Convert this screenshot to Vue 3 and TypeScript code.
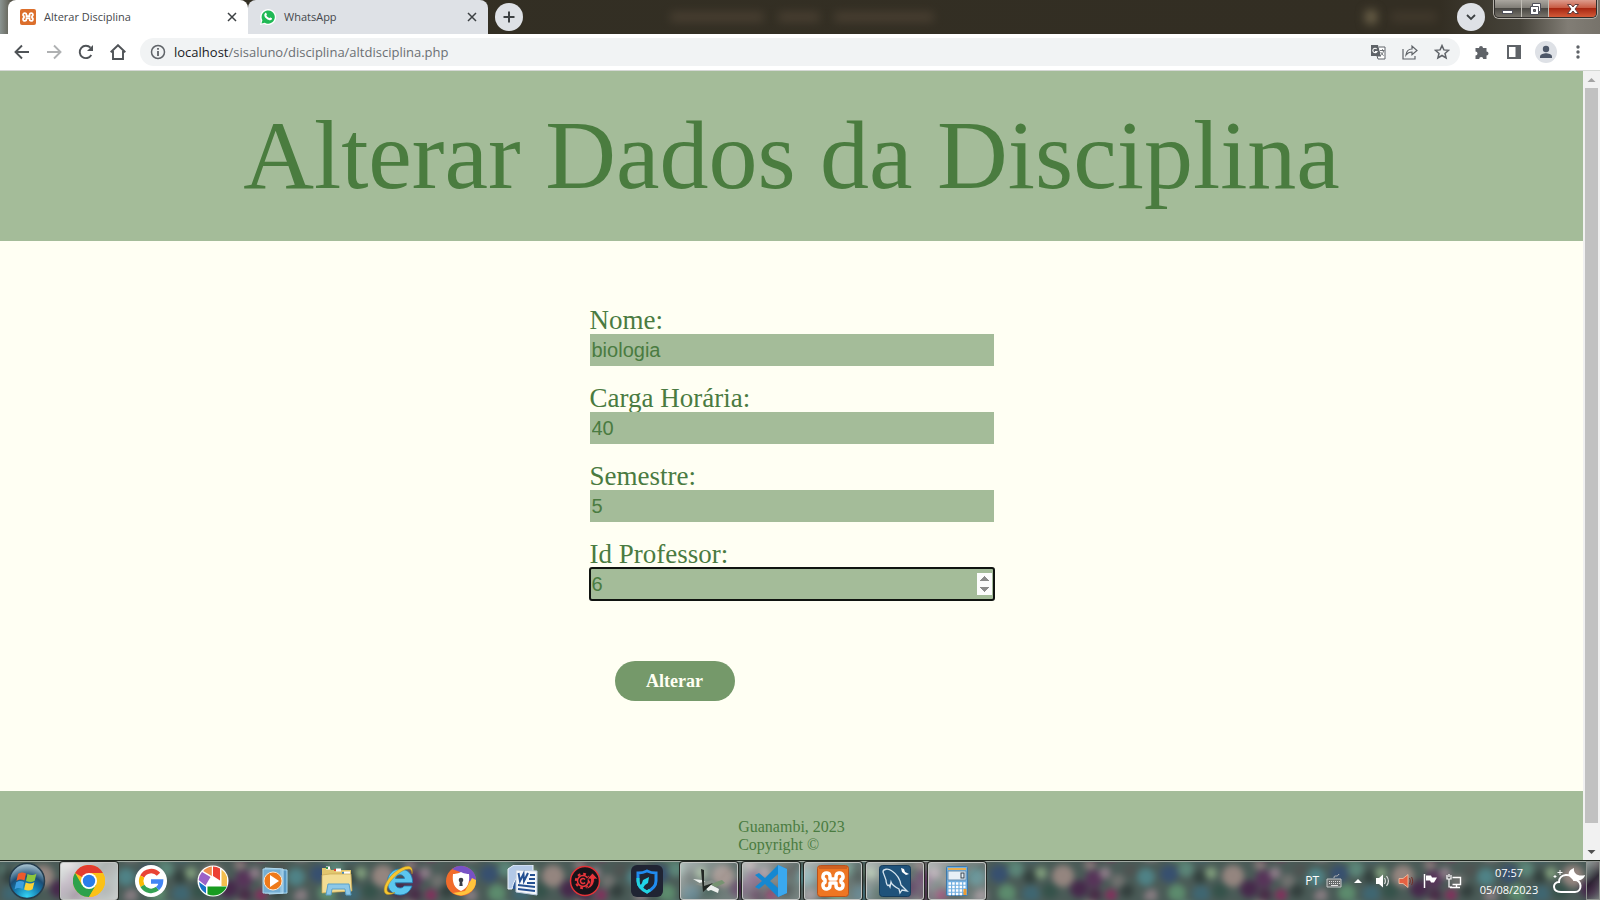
<script setup lang="ts">
import { ref } from 'vue'

interface Field {
  id: string
  label: string
  type: 'text' | 'number'
  value: string
  active?: boolean
}

const fields = ref<Field[]>([
  { id: 'nome', label: 'Nome:', type: 'text', value: 'biologia' },
  { id: 'carga', label: 'Carga Horária:', type: 'number', value: '40' },
  { id: 'semestre', label: 'Semestre:', type: 'number', value: '5' },
  { id: 'professor', label: 'Id Professor:', type: 'number', value: '6', active: true },
])

// Soft wallpaper spots seen through the translucent taskbar; one repeating tile.
interface Spot { x: number; y: number; r: number; c: string }
const spots: Spot[] = [
  { x: 12, y: 13, r: 9, c: '#37506f' },
  { x: 29, y: 8, r: 8, c: '#5b8578' },
  { x: 20, y: 32, r: 9, c: '#5c8b6d' },
  { x: 43, y: 16, r: 7, c: '#33423f' },
  { x: 54, y: 12, r: 6, c: '#7f9c7b' },
  { x: 44, y: 33, r: 9, c: '#3f6671' },
  { x: 63, y: 30, r: 8, c: '#35524a' },
  { x: 76, y: 15, r: 11, c: '#94857f' },
  { x: 92, y: 28, r: 9, c: '#46294b' },
  { x: 107, y: 18, r: 9, c: '#573459' },
  { x: 103, y: 3, r: 6, c: '#8a7b7b' },
  { x: 118, y: 12, r: 6, c: '#8b7b86' },
  { x: 108, y: 34, r: 7, c: '#492e48' },
  { x: 124, y: 34, r: 6, c: '#832f5c' },
  { x: 131, y: 20, r: 7, c: '#70716f' },
  { x: 143, y: 9, r: 7, c: '#4e5452' },
  { x: 140, y: 30, r: 7, c: '#34403e' },
  { x: 159, y: 16, r: 9, c: '#4f8286' },
  { x: 165, y: 36, r: 8, c: '#857b80' },
]
</script>

<template>
  <div class="screen">
    <header class="tabstrip">
      <div class="tab active">
        <svg class="fav" viewBox="0 0 32 32"><rect width="32" height="32" rx="4" fill="#dc6f2c" /><path d="M13 11.500V14h6v-2.500A3.500 3.500 0 1 1 24 14.700v2.600A3.500 3.500 0 1 1 19 20.500V18h-6v2.500A3.500 3.500 0 1 1 8 17.300v-2.600A3.500 3.500 0 1 1 13 11.500z" fill="none" stroke="#fff" stroke-width="3.500" /></svg>
        <span class="tab-title">Alterar Disciplina</span>
        <button class="tab-close" aria-label="Fechar guia"><svg viewBox="0 0 10 10"><path d="M1 1l8 8M9 1l-8 8" /></svg></button>
      </div>
      <div class="tab">
        <svg class="fav" viewBox="0 0 16 16"><path d="M0 16l1.200-4A8 8 0 1 1 4.200 15z" fill="#fff" /><path d="M1.500 14.500l.900-3.300A6.600 6.600 0 1 1 4.800 13.700z" fill="#20b955" /><path d="M5 4.200c1-1 1.300-.2 1.900 1.100.2.500-.7 1-.5 1.300.7 1.400 1.600 2 2.800 2.500.4.200.8-.9 1.200-.7 1.500.7 2 .9 1.500 1.900-1 1.700-3.300 1.100-5.300-.5C4.300 8.200 3.600 5.700 5 4.200z" fill="#fff" /></svg>
        <span class="tab-title">WhatsApp</span>
        <button class="tab-close" aria-label="Fechar guia"><svg viewBox="0 0 10 10"><path d="M1 1l8 8M9 1l-8 8" /></svg></button>
      </div>
      <button class="round" aria-label="Nova guia"><svg viewBox="0 0 14 14"><path d="M7 1.500v11M1.500 7h11" /></svg></button>
      <div class="glass"><i class="smudge one"></i><i class="smudge two"></i><i class="smudge three"></i><i class="smudge four"></i><i class="smudge five"></i></div>
      <button class="round search" aria-label="Pesquisar guias"><svg viewBox="0 0 14 14"><path d="M3 5l4 4 4-4" /></svg></button>
      <div class="winbtns">
        <button aria-label="Minimizar"><svg viewBox="0 0 14 12"><rect x="1.500" y="7.500" width="10" height="3" fill="#fff" stroke="#50505a" /></svg></button>
        <button aria-label="Restaurar"><svg viewBox="0 0 14 12"><path d="M4.500.500h8v8h-2v3h-8v-8h2z" fill="#fff" stroke="#50505a" /><path d="M5.500 6.500h2v2h-2z" fill="#77746c" stroke="#50505a" /><path d="M4.500 3.500h6v5" fill="none" stroke="#50505a" /></svg></button>
        <button class="close" aria-label="Fechar"><svg viewBox="0 0 14 12"><path d="M1.500 1.500h3.500L7 4l2-2.500h3.500L9 6l3.500 4.500H9L7 8l-2 2.500H1.500L5 6z" fill="#fff" stroke="#5f3b3b" /></svg></button>
      </div>
    </header>

    <nav class="toolbar">
      <div class="navbtns">
        <button aria-label="Voltar"><svg viewBox="0 0 16 16"><path d="M15 8H2M8 1.500L1.500 8 8 14.500" /></svg></button>
        <button class="off" aria-label="Avançar"><svg viewBox="0 0 16 16"><path d="M1 8h13M8 1.500L14.500 8 8 14.500" /></svg></button>
        <button aria-label="Recarregar"><svg viewBox="0 0 16 16"><path d="M13.300 11A6.200 6.200 0 1 1 12.500 3.700" /><path d="M15 1v6H9z" fill="#4f5357" stroke="none" /></svg></button>
        <button aria-label="Página inicial"><svg viewBox="0 0 16 16"><path d="M.700 8.300L8 1.200l7.300 7.100M3 7v8h10V7" /></svg></button>
      </div>
      <div class="omnibox">
        <svg class="info" viewBox="0 0 16 16"><circle cx="8" cy="8" r="6.500" fill="none" stroke="#5f6368" stroke-width="1.500" /><path d="M8 7v5M8 4v1.800" stroke="#5f6368" stroke-width="1.800" /></svg>
        <span class="url"><b>localhost</b>/sisaluno/disciplina/altdisciplina.php</span>
        <div class="actions">
          <button aria-label="Traduzir"><svg viewBox="0 0 16 16"><path d="M1 1h7l3 11H1z" fill="#5f6368" /><path d="M9 3h6v12H8l-1-3h4" fill="#fff" stroke="#5f6368" stroke-width="1" /><path d="M10 6.500h4.500M12.500 5.200v1.300M10.700 8c1 2 2 3 3 3.500M13.500 7c-.5 2-1.300 3.300-2.500 4.300" fill="none" stroke="#5f6368" stroke-width=".9" /><path d="M6.700 5a2.200 2.200 0 1 0 .3 2.500H5" fill="none" stroke="#fff" stroke-width="1.100" /></svg></button>
          <button aria-label="Compartilhar"><svg viewBox="0 0 16 16"><path d="M1 5v10h12v-3M4 11c.5-4 2.500-6 6-6V2l5 4.500-5 4.300V8C7.500 8 5.500 9 4 11z" fill="none" stroke="#5f6368" stroke-width="1.200" /></svg></button>
          <button aria-label="Favoritos"><svg viewBox="0 0 16 16"><path d="M8 1.600l1.900 4.300 4.700.4-3.600 3.100 1.100 4.600L8 11.500 3.900 14 5 9.400 1.400 6.300l4.700-.4z" fill="none" stroke="#5f6368" stroke-width="1.500" /></svg></button>
        </div>
      </div>
      <div class="ext">
        <button aria-label="Extensões"><svg viewBox="0 0 16 16"><path d="M1.500 4H5a2 2 0 1 1 4 0h3.500v3.500a2 2 0 1 1 0 4V15H9.200a2 2 0 0 0-4 0H1.500v-3.500a2 2 0 0 0 0-4z" fill="#5f6368" /></svg></button>
        <button aria-label="Painel lateral"><svg viewBox="0 0 16 16"><path d="M1 1h14v14H1zM3 3v10h6.500V3z" fill="#5f6368" fill-rule="evenodd" /></svg></button>
        <button class="profile" aria-label="Perfil"><svg viewBox="0 0 16 16"><circle cx="8" cy="5" r="3.200" fill="#4d5768" /><path d="M2 14v-1.500c0-2.500 4-3.300 6-3.300s6 .8 6 3.300V14z" fill="#4d5768" /></svg></button>
        <button aria-label="Menu"><svg viewBox="0 0 16 16"><g fill="#5f6368"><circle cx="8" cy="3" r="1.700" /><circle cx="8" cy="8" r="1.700" /><circle cx="8" cy="13" r="1.700" /></g></svg></button>
      </div>
    </nav>

    <div class="viewport">
      <div class="page">
        <div class="banner"><h1>Alterar Dados da Disciplina</h1></div>
        <main>
          <form @submit.prevent>
            <div v-for="f in fields" :key="f.id" class="field">
              <label :for="f.id">{{ f.label }}</label>
              <input :id="f.id" v-model="f.value" :type="f.type" :class="{ current: f.active }" />
            </div>
            <button type="submit" class="submit">Alterar</button>
          </form>
        </main>
        <footer><p>Guanambi, 2023<br />Copyright ©</p></footer>
      </div>
      <div class="scrollbar">
        <svg viewBox="0 0 17 17"><path d="M4.500 11h8l-4-4z" fill="#a3a3a3" /></svg>
        <div class="thumb"></div>
        <svg viewBox="0 0 17 17"><path d="M4.500 7h8l-4 4z" fill="#505050" /></svg>
      </div>
    </div>

    <div class="taskbar">
      <svg class="wall">
        <defs>
          <pattern id="floral" x="137" width="170" height="40" patternUnits="userSpaceOnUse">
            <rect width="170" height="40" fill="#4a5b57" />
            <circle v-for="(s, i) in spots" :key="i" :cx="s.x" :cy="s.y" :r="s.r" :fill="s.c" />
          </pattern>
        </defs>
        <rect width="100%" height="40" fill="#4a5b57" />
        <rect class="haze" y="-20" width="100%" height="80" fill="url(#floral)" />
      </svg>
      <button class="start" aria-label="Iniciar">
        <svg viewBox="0 0 38 38">
          <defs>
            <radialGradient id="orb" cx=".5" cy=".95" r=".95"><stop offset="0" stop-color="#35d5f5" /><stop offset=".4" stop-color="#1478ad" /><stop offset=".62" stop-color="#1c4d74" /><stop offset="1" stop-color="#b4cdd8" /></radialGradient>
          </defs>
          <circle cx="19" cy="19" r="17.500" fill="url(#orb)" stroke="#263d4d" stroke-width="1.500" />
          <path d="M10 12c3-2 5-2 8-.5l-1.500 7c-3-1.500-5-1.500-8 .3z" fill="#ee5a2b" />
          <path d="M19.500 12c3 1.400 6 1.500 9-.5l-1.800 7.200c-3 1.700-5.600 1.500-8.700.2z" fill="#8cc63e" />
          <path d="M8.200 20.300c3-1.700 5-1.700 8-.3l-1.600 7c-3-1.300-5-1.400-8 .3z" fill="#3d9fe0" />
          <path d="M17.700 20.500c3 1.300 5.700 1.500 8.700-.2l-1.800 7c-3 1.700-5.500 1.500-8.500.2z" fill="#fdd235" />
        </svg>
      </button>

      <button class="task open bright" aria-label="Chrome">
        <svg viewBox="0 0 32 32"><circle cx="16" cy="16" r="16" fill="#fbc116" /><path d="M16 16L2.100 8A16 16 0 0 1 29.900 8H16z" fill="#e33b2e" /><path d="M2.100 8A16 16 0 0 0 16 32l7-12-7-4-7 4z" fill="#2da14c" /><path d="M16 8h13.900A16 16 0 0 1 16 32l7-12z" fill="#fbc116" /><circle cx="16" cy="16" r="8" fill="#fff" /><circle cx="16" cy="16" r="6.200" fill="#2a7de9" /></svg>
      </button>
      <button class="task" aria-label="Google">
        <svg viewBox="0 0 32 32"><circle cx="16" cy="16" r="16" fill="#fff" /><g fill="none" stroke-width="4.500"><path d="M7.200 11.600A10 10 0 0 1 23.500 9.300" stroke="#e94435" /><path d="M7.400 20.800a10 10 0 0 1-.2-9.200" stroke="#fabb05" /><path d="M22.500 23.600A10 10 0 0 1 7.400 20.800" stroke="#34a353" /><path d="M16 16.500h10a10 10 0 0 1-3.500 7.100" stroke="#4285f4" /></g></svg>
      </button>
      <button class="task" aria-label="Picasa">
        <svg viewBox="0 0 32 32"><circle cx="16" cy="16" r="15.500" fill="#fff" /><path d="M14.800 1.500v9.500L6.200 6A14.500 14.500 0 0 1 14.800 1.500z" fill="#ef8e4b" /><path d="M5 7l8.500 5-5 8.500L1.600 15A14.500 14.500 0 0 1 5 7z" fill="#9b62c7" /><path d="M16 1.500a14.500 14.500 0 0 1 7 1.900v12L16 11z" fill="#ec4135" /><path d="M24.500 4.500A14.500 14.500 0 0 1 30 12v9h-5.500z" fill="#f5bf4e" /><path d="M10.500 21.500h19.300a14.500 14.500 0 0 1-19.300 7.800z" fill="#189b20" /><path d="M2 17l7 5v6.500A14.500 14.500 0 0 1 2 17z" fill="#1674c8" /></svg>
      </button>
      <button class="task" aria-label="Media Player">
        <svg viewBox="0 0 32 32"><path d="M10 4l18 1v23l-18 1z" fill="#5998c3" stroke="#a9daf2" /><path d="M6 3l18 1v24H6z" fill="#82b9db" stroke="#bbdff2" /><path d="M4 4h18v24H4z" fill="#75aed2" stroke="#a7d1e8" /><circle cx="14" cy="16" r="9" fill="#ee7919" stroke="#ffe5ca" /><path d="M11 10l9 6-9 6z" fill="#fff" /></svg>
      </button>
      <button class="task" aria-label="Explorador">
        <svg viewBox="0 0 32 32"><path d="M1 3h8l1 2h20v22H1z" fill="#e2c66e" /><path d="M5 3h4M15 5h5M23 8h6" stroke="#fff" stroke-width="3" /><path d="M5 3h2" stroke="#37964e" stroke-width="2" /><path d="M13 5h2" stroke="#de3e32" stroke-width="2" /><path d="M21 8h2" stroke="#4088c5" stroke-width="2" /><path d="M1 10l8-1h21l1 17-30 2z" fill="#f2dd94" stroke="#c7a653" stroke-width=".7" /><path d="M5 30l2-11h21l2 11h-5l-1-6H11l-1 6z" fill="#8cc8e8" stroke="#5ba1ca" /></svg>
      </button>
      <button class="task" aria-label="Internet Explorer">
        <svg viewBox="0 0 32 32"><path d="M17 4C9.500 4 4.500 9.500 4.500 17c0 7.500 5 13 12.500 13 6 0 10-3.500 12-9h-8c-1 2.500-6.500 3-8.200-.5-.5-1-.6-2-.6-2.700h17.300C30 9 24.500 4 17 4zM12.500 13.500c.7-5 8.500-5 9 0z" fill="#5cc6ee" stroke="#217db5" stroke-width=".8" fill-rule="evenodd" /><path d="M29 9c2-10-6-9-14-4C4 12-1 24 2 28c2 3 8 1 10-.5-5 1-8 0-8-3C4 18 17 4 26 4c2 0 3 2 3 5z" fill="#f8c62f" stroke="#ae8a25" stroke-width=".5" /></svg>
      </button>
      <button class="task" aria-label="Navegador seguro">
        <svg viewBox="0 0 32 32"><circle cx="16" cy="16" r="15" fill="#f16c2b" /><path d="M7 4a15 15 0 0 1 24 12l-4 2L15 7z" fill="#7752c6" /><path d="M31 15A15 15 0 0 1 8 28l12-2 7-13z" fill="#ffc43c" /><path d="M16 7c4 2 8 2 8 2 1 8-1 14-8 17-7-3-9-9-8-17 0 0 4 0 8-2z" fill="#fff" /><circle cx="16" cy="15" r="2.300" fill="#373c45" /><path d="M15 15h2l.7 6h-3.400z" fill="#373c45" /></svg>
      </button>
      <button class="task" aria-label="Word">
        <svg viewBox="0 0 32 32"><path d="M1 4l6-4h19v24H1z" fill="#2b5796" /><path d="M1 4l6-4h19v6C15 6 8 10 5 24H1z" fill="#b3c9e7" stroke="#eef4fb" /><path d="M9 5l21 1v24L9 27z" fill="#f5f7fb" stroke="#bac9dc" /><path d="M11.500 8l1.500 8 3.500-7 .5 7 4-8" fill="none" stroke="#244f91" stroke-width="2" /><path d="M23 10h5M22 14h6M20 18h8M11 20l17 2M11 24l17 2" fill="none" stroke="#244f91" stroke-width="2" /></svg>
      </button>
      <button class="task" aria-label="Driver Booster">
        <svg viewBox="0 0 32 32"><circle cx="16" cy="16" r="14.500" fill="#171319" stroke="#e33238" stroke-width="1.500" /><g fill="none" stroke="#ea353b"><circle cx="14" cy="16" r="5.500" stroke-width="1.500" /><circle cx="14" cy="16" r="7.200" stroke-width="2" stroke-dasharray="2.800 2.850" /><path d="M16 14.500a2.500 2.500 0 1 0 0 3" stroke-width="1.500" /></g><path d="M16 24c4-2 6-5 5.500-10H18l5.500-6 5.500 6h-3.500c0 6-4 10-9.500 10z" fill="#ea353b" stroke="#171319" stroke-width=".8" /></svg>
      </button>
      <button class="task" aria-label="Segurança">
        <svg viewBox="0 0 32 32"><rect width="32" height="32" rx="6" fill="#202433" /><path d="M16 6c4 2 9 2 9 2v8c0 5-3 8-9 11-6-3-9-6-9-11V8s5 0 9-2z" fill="none" stroke="#208cf1" stroke-width="3" /><path d="M7 13v3c0 5 3 8 9 11l3-2" fill="none" stroke="#22d3dd" stroke-width="3" /><path d="M8 23l3-5 1-3 6-3-1 6-3 2-2 3z" fill="#20d4e8" /></svg>
      </button>
      <button class="task open" aria-label="Workspace">
        <svg viewBox="0 0 32 32"><path d="M0 14l9 1 17 9-1 4-7-3-3 1-5-6z" fill="#edf0ed" /><path d="M17 19l12-4 3 3-9 4z" fill="#779371" /><path d="M2 19l17-4 4 2-12 5z" fill="#868e88" /><path d="M8 4l3 1v16l9-3-10 9z" fill="#222723" /></svg>
      </button>
      <button class="task open" aria-label="VS Code">
        <svg viewBox="0 0 32 32"><path d="M23 0l9 4v24l-9 4L10 19l-6 5-4-2 7-6-7-6 4-2 6 5zM23 9l-8 7 8 7z" fill="#1588d1" fill-rule="evenodd" /><path d="M23 0l9 4v24l-9 4z" fill="#3aa8ef" /></svg>
      </button>
      <button class="task open" aria-label="XAMPP">
        <svg viewBox="0 0 32 32"><rect x=".500" y=".500" width="31" height="31" rx="3" fill="#ee7623" stroke="#ba521b" /><path d="M2 1h28v3H2z" fill="#b95421" opacity=".6" /><path d="M13 11.500V14h6v-2.500A3.500 3.500 0 1 1 24 14.700v2.600A3.500 3.500 0 1 1 19 20.500V18h-6v2.500A3.500 3.500 0 1 1 8 17.300v-2.600A3.500 3.500 0 1 1 13 11.500z" fill="none" stroke="#fff" stroke-width="3.500" stroke-linejoin="round" /></svg>
      </button>
      <button class="task open" aria-label="MySQL Workbench">
        <svg viewBox="0 0 32 32"><rect x=".500" y=".500" width="31" height="31" rx="3" fill="#1f527a" stroke="#163c5b" /><path d="M10 20c-2 2-3-3-3-5L4 7c0-3 5-4 9-1 6 4 8 8 9 14l6 6-5-1-2 3-1-4c-4-2-7-4-8-7l-1 5z" fill="none" stroke="#d5e4ee" stroke-width="1.300" /><path d="M22 3l3 1 1 3 4 2-3 1-4-3z" fill="#fff" /></svg>
      </button>
      <button class="task open" aria-label="Calculadora">
        <svg viewBox="0 0 32 32"><rect x="5.500" y="1.500" width="21" height="29" rx="1" fill="#72afe0" stroke="#3c79ab" /><path d="M7 3h18v2H7z" fill="#e8af52" /><path d="M7 6h18v9H7z" fill="#e8f0f7" stroke="#6a91b2" /><rect x="20" y="8" width="3" height="5" fill="none" stroke="#34404c" /><g stroke="#fff" stroke-width="2.500" stroke-dasharray="2.500 1.200"><path d="M7.500 18.500h17M7.500 22h17M7.500 25.500h17M7.500 29h14" /></g><path d="M22.500 24h3v6h-3z" fill="#ed9b30" /></svg>
      </button>

      <div class="tray">
        <span class="lang">PT</span>
        <svg class="ic" viewBox="0 0 16 16"><path d="M8 5c0-4 3 0 5-4" fill="none" stroke="#bbb" /><path d="M1 6h14v8H1z" fill="#666a6a" stroke="#c4c7c7" /><path d="M3 8.500h11M3 10.500h11" stroke="#e2e2e2" stroke-dasharray="1 1" /><path d="M5 12.500h7" stroke="#e2e2e2" /></svg>
        <svg class="ic" viewBox="0 0 16 16"><path d="M4 10l4-4 4 4z" fill="#fff" /></svg>
        <svg class="ic" viewBox="0 0 16 16"><path d="M2 5h3l4-3.500v13L5 11H2z" fill="#fff" /><path d="M10.500 5c1.200 2 1.200 4 0 6M12.500 3c2.300 3 2.300 7 0 10" fill="none" stroke="#ddd" stroke-width="1.200" /></svg>
        <svg class="ic" viewBox="0 0 16 16"><path d="M1 5.500h4l5-4v13l-5-4H1z" fill="#e56142" stroke="#f4c5a8" stroke-width=".8" /><path d="M11.500 5c1 2 1 4 0 6M13.500 4c1.500 2.500 1.500 6 0 8" fill="none" stroke="#702f27" /></svg>
        <svg class="ic" viewBox="0 0 16 16"><path d="M2.500 1v14" stroke="#fff" stroke-width="1.500" /><path d="M4 2.500h5l1 2h5l-3 5H9l-1-2H4z" fill="#fff" /></svg>
        <svg class="ic" viewBox="0 0 16 16"><path d="M6.500 4.500h8v7h-8M4 14.500h10M10.500 12v2.500" fill="none" stroke="#fff" stroke-width="1.400" /><path d="M1 2v4h4V2M3 1v3M3 6v8h3" fill="none" stroke="#fff" stroke-width="1.200" /></svg>
        <div class="clock"><span>07:57</span><span>05/08/2023</span></div>
        <svg class="weather" viewBox="0 0 34 28"><path d="M9 25C0 25 0 15 7 15c0-9 13-9 15-2 8-1 9 12 1 12z" fill="none" stroke="#fff" stroke-width="2" /><path d="M22 1c-6 2-7 7-3 10 5 5 13 2 14-3-6 2-12-1-11-7z" fill="#fff" /><path d="M8 3v5M5.500 5.500h5M3 8v3M1.500 9.500h3" stroke="#fff" /></svg>
      </div>
      <button class="desktop" aria-label="Mostrar área de trabalho"></button>
    </div>
  </div>
</template>

<style>
body { margin: 0; }
</style>

<style scoped>
* { box-sizing: border-box; }
button { padding: 0; border: 0; background: none; font: inherit; color: inherit; }
svg { display: block; }
.screen { display: flex; flex-direction: column; height: 100vh; overflow: hidden; font-family: "Open Sans", "Noto Sans", sans-serif; }

.tabstrip { display: flex; align-items: center; height: 34px; padding-left: 8px; background: linear-gradient(90deg, #8b9491 0, #6a6b62 8px, #332f24 16px, #332e23 90%, #47443b 95%, #817d75 98%, #77736b); }
.tab { display: flex; align-items: center; flex: 0 0 240px; height: 34px; padding: 0 9px 0 12px; border-radius: 8px 8px 0 0; background: #dee1e6; color: #45484c; }
.tab.active { background: #fff; }
.fav { width: 16px; height: 16px; margin-right: 8px; }
.tab-title { flex: 1; font-size: 11px; line-height: 16px; white-space: nowrap; }
.tab-close { display: grid; place-items: center; width: 14px; height: 16px; }
.tab-close svg { width: 10px; height: 10px; fill: none; stroke: #3c4043; stroke-width: 1.500; }
.round { display: grid; place-items: center; flex: none; width: 28px; height: 28px; margin-left: 7px; border-radius: 50%; background: #dee1e6; }
.round svg { width: 14px; height: 14px; fill: none; stroke: #3c4043; stroke-width: 2; }
.glass { display: flex; align-items: center; flex: 1; height: 34px; padding: 0 20px 0 147px; }
.smudge { height: 10px; margin-right: 14px; border-radius: 4px; background: #574a3b; filter: blur(5px); opacity: .6; }
.one { width: 94px; }
.two { width: 42px; }
.three { width: 100px; margin-right: auto; }
.four { width: 12px; height: 14px; background: #6b6149; opacity: 1; }
.five { width: 46px; margin-right: 0; opacity: .4; }
.search { margin: 0 9px 0 0; }
.search svg { stroke-width: 1.800; }
.winbtns { display: flex; align-self: flex-start; flex: none; margin-right: 3px; height: 18px; border: 1px solid #2f2d2b; border-top: 0; border-radius: 0 0 5px 5px; box-shadow: 0 0 0 1px #b5b1aa; overflow: hidden; }
.winbtns button { display: grid; place-items: center; width: 27px; background: linear-gradient(#aaa69f, #817e77 45%, #4a4843 50%, #77736b); border-right: 1px solid #c0bdb5; }
.winbtns .close { width: 47px; border: 0; background: linear-gradient(#dd9c8d, #c85c45 45%, #a82712 50%, #d35a38); }
.winbtns svg { width: 14px; height: 12px; }

.toolbar { display: flex; align-items: center; height: 37px; padding: 0 12px; background: #fff; border-bottom: 1px solid #d5d8d5; }
.navbtns { display: flex; gap: 12px; margin-right: 12px; }
.navbtns button { display: grid; place-items: center; width: 20px; height: 28px; }
.navbtns svg { width: 16px; height: 16px; fill: none; stroke: #4f5357; stroke-width: 1.900; }
.navbtns .off { opacity: .45; }
.omnibox { display: flex; align-items: center; flex: 1; height: 28px; padding: 0 10px; border-radius: 14px; background: #f1f3f4; }
.info { width: 16px; height: 16px; margin-right: 8px; }
.url { flex: 1; font-size: 13px; line-height: 20px; color: #6b6f73; white-space: nowrap; }
.url b { font-weight: 400; color: #202124; }
.actions { display: flex; gap: 16px; }
.actions svg, .ext svg { width: 16px; height: 16px; }
.ext { display: flex; align-items: center; gap: 16px; margin-left: 14px; }
.ext .profile { display: grid; place-items: center; width: 22px; height: 22px; margin: 0 -3px; border-radius: 50%; background: #dee1e6; }
.ext button:last-child { margin-right: 2px; }

.viewport { display: flex; flex: 1; min-height: 0; background: #fffff3; }
.page { flex: 1; min-width: 0; overflow: hidden; display: flex; flex-direction: column; color: #4a7b41; font-family: "Liberation Serif", serif; }
.banner { padding: 28px 16px 30px; background: #a4bc99; text-align: center; }
h1 { margin: 0; font-size: 98px; line-height: 112px; font-weight: 400; color: #4a7c3f; }
main { padding: 65px 16px 90px; }
form { width: 404px; max-width: 100%; margin: 0 auto; }
.field { display: flex; flex-direction: column; margin-bottom: 18px; }
.field label { font-size: 27px; line-height: 28px; }
.field input { width: 100%; height: 32px; padding: 1px 2px; border: 0; border-radius: 0; background: #a4bc99; color: #4a7b41; font-family: "Liberation Sans", sans-serif; font-size: 20px; }
.field input:focus, .field .current { outline: 2px solid #101410; outline-offset: -1px; border-radius: 2px; }
.field .current::-webkit-inner-spin-button { opacity: 1; }
.submit { display: block; width: 120px; height: 40px; margin: 61px 0 0 25px; border-radius: 20px; background: #75996a; color: #fffff3; font-size: 18px; font-weight: 700; line-height: 40px; }
footer { flex: 1; display: flex; justify-content: center; padding-top: 27px; background: #a4bc99; }
footer p { margin: 0; font-size: 16px; line-height: 18px; }
.scrollbar { display: flex; flex-direction: column; align-items: center; width: 17px; background: #f1f1f1; }
.scrollbar svg { width: 17px; height: 17px; }
.thumb { flex: 1; width: 13px; margin-bottom: 20px; background: #c1c1c1; }

.taskbar { position: relative; display: flex; align-items: center; flex: none; height: 40px; border-top: 1px solid #1d241d; box-shadow: inset 0 1px #a1aaa3; }
.wall { position: absolute; inset: 0; z-index: -1; width: 100%; height: 100%; overflow: hidden; }
.haze { filter: blur(3px); }
.start { display: grid; place-items: center; width: 54px; height: 38px; margin-right: 6px; }
.start svg { width: 38px; height: 38px; }
.task { display: grid; place-items: center; width: 58px; height: 38px; margin-right: 4px; border: 1px solid transparent; border-radius: 3px; }
.task svg { width: 32px; height: 32px; }
.open { border-color: #c3c5c3; box-shadow: 0 0 0 1px #252925; background: linear-gradient(135deg, rgba(255,255,255,.55), rgba(255,255,255,.15) 60%, rgba(255,255,255,.25)); }
.bright { background: linear-gradient(135deg, rgba(255,255,255,.85), rgba(255,255,255,.55) 50%, rgba(255,255,255,.7)); }
.tray { display: flex; align-items: center; margin-left: auto; color: #fff; font-size: 12px; }
.lang { margin-right: 7px; }
.ic { width: 16px; height: 16px; margin-right: 8px; }
.clock { display: flex; flex-direction: column; align-items: center; width: 62px; margin: 0 12px 0 8px; font-size: 11px; line-height: 17px; }
.weather { width: 34px; height: 28px; }
.desktop { width: 14px; height: 39px; border: 1px solid #8f9490; background: linear-gradient(135deg, rgba(255,255,255,.4), rgba(20,15,25,.5) 50%, rgba(255,255,255,.2)); }
</style>
